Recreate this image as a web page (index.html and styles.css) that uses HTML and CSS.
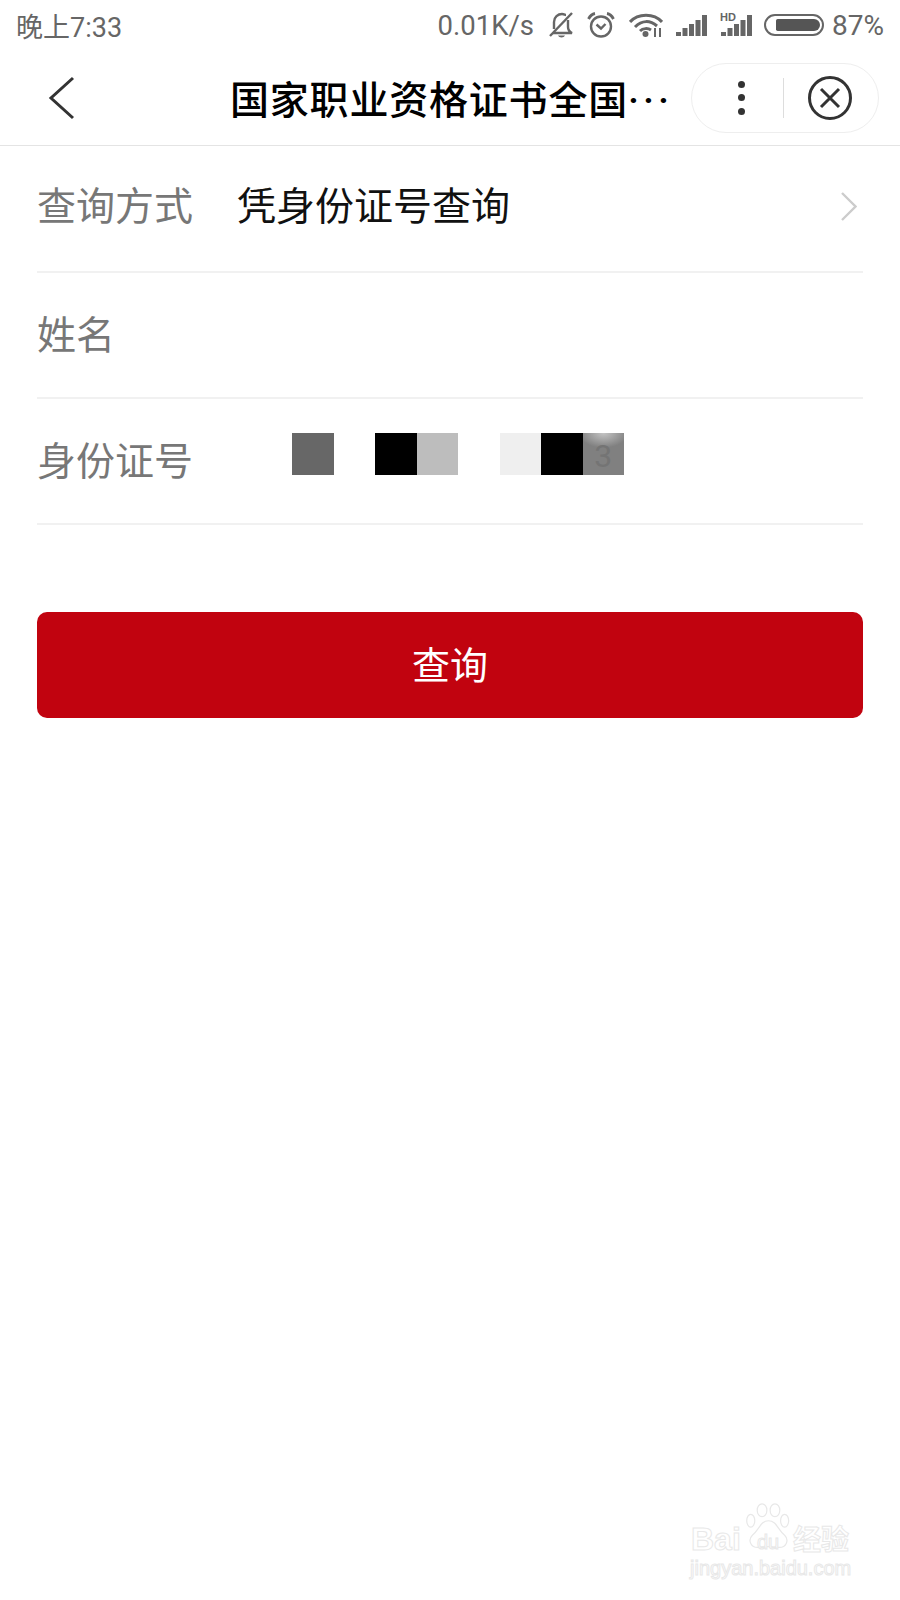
FILE: index.html
```html
<!DOCTYPE html>
<html lang="zh-CN">
<head>
    <meta charset="UTF-8">
    <meta name="viewport" content="width=device-width, initial-scale=1.0">
    <title>国家职业资格证书全国联网查询</title>
    <link rel="stylesheet" href="styles.css">
</head>
<body>
    <div class="status-bar">
        <span class="status-time">晚上7:33</span>
        <div class="status-right">
            <span class="status-speed">0.01K/s</span>
            <svg class="icon-bell" width="26" height="26" viewBox="0 0 26 26" fill="none" stroke="#666" stroke-width="2.4">
                <path d="M2 24 L24 1"/>
                <path d="M6 17 V10 C6 5 10 2 14 2 C16 2 17 3 18 3"/>
                <path d="M20 8 V15 C20 18 22 20 24 21 H5"/>
                <path d="M10 23.5 H17 C16 26 11 26 10 23.5 Z" fill="#666" stroke="none"/>
            </svg>
            <svg class="icon-clock" width="28" height="26" viewBox="0 0 28 26" fill="none" stroke="#666" stroke-width="2.4">
                <circle cx="14" cy="14.5" r="10"/>
                <path d="M9.5 12.5 L14 16.5 L18.5 12"/>
                <path d="M1.5 7 C3 4 5 2 8 1.5 M26.5 7 C25 4 23 2 20 1.5" stroke-width="2.8"/>
            </svg>
            <svg class="icon-wifi" width="34" height="24" viewBox="0 0 34 24" fill="none" stroke="#666" stroke-width="3">
                <path d="M1 9 C9 0 25 0 33 9"/>
                <path d="M6 14 C13 7 21 7 28 13"/>
                <path d="M11 18 C14 15 19 15 22 17"/>
                <circle cx="16.5" cy="21" r="3" fill="#666" stroke="none"/>
                <path d="M26 15 V24 M31 15 V24" stroke-width="2"/>
            </svg>
            <svg class="icon-signal" width="32" height="22" viewBox="0 0 32 22" fill="#666">
                <rect x="0" y="18" width="5" height="4"/>
                <rect x="6.5" y="14" width="5" height="8"/>
                <rect x="13" y="10" width="5" height="12"/>
                <rect x="19.5" y="6" width="5" height="16"/>
                <rect x="26" y="1" width="5" height="21"/>
            </svg>
            <div class="signal-hd">
                <span class="hd-label">HD</span>
                <svg width="32" height="22" viewBox="0 0 32 22" fill="#666">
                    <rect x="0" y="18" width="5" height="4"/>
                    <rect x="6.5" y="14" width="5" height="8"/>
                    <rect x="13" y="10" width="5" height="12"/>
                    <rect x="19.5" y="6" width="5" height="16"/>
                    <rect x="26" y="1" width="5" height="21"/>
                </svg>
            </div>
            <div class="battery"><div class="battery-fill"></div></div>
            <span class="status-percent">87%</span>
        </div>
    </div>

    <header class="nav-bar">
        <svg class="nav-back" width="28" height="44" viewBox="0 0 28 44" fill="none" stroke="#333" stroke-width="3">
            <path d="M25 2 L3 22 L25 42"/>
        </svg>
        <h1 class="nav-title">国家职业资格证书全国<span class="nav-dots">···</span></h1>
        <div class="capsule">
            <div class="capsule-more"><span></span><span></span><span></span></div>
            <div class="capsule-line"></div>
            <svg class="capsule-close" width="44" height="44" viewBox="0 0 44 44" fill="none" stroke="#333" stroke-width="3">
                <circle cx="22" cy="22" r="20.5"/>
                <path d="M13 13 L31 31 M31 13 L13 31"/>
            </svg>
        </div>
    </header>

    <main class="query-form">
        <div class="form-row form-row-first">
            <span class="form-label">查询方式</span>
            <span class="form-value">凭身份证号查询</span>
            <svg class="row-arrow" width="16" height="29" viewBox="0 0 16 29" fill="none" stroke="#ccc" stroke-width="2.4">
                <path d="M1 1 L14.5 14.5 L1 28"/>
            </svg>
        </div>
        <div class="form-row">
            <span class="form-label">姓名</span>
        </div>
        <div class="form-row">
            <span class="form-label">身份证号</span>
            <div class="id-mask">
                <span class="mask mask-grey"></span>
                <span class="mask mask-blank"></span>
                <span class="mask mask-black"></span>
                <span class="mask mask-silver"></span>
                <span class="mask mask-blank"></span>
                <span class="mask mask-pale"></span>
                <span class="mask mask-black"></span>
                <span class="mask mask-glow">3</span>
            </div>
        </div>
        <button class="query-button">查询</button>
    </main>

    <div class="watermark">
        <div class="wm-top">
            <span class="wm-bai">Bai</span>
            <svg class="wm-paw" width="47" height="50" viewBox="0 0 56 62" fill="#fff" stroke="#e8e8e8" stroke-width="1.5">
                <ellipse cx="6" cy="22" rx="5" ry="8"/>
                <ellipse cx="20" cy="9" rx="6" ry="8"/>
                <ellipse cx="36" cy="9" rx="6" ry="8"/>
                <ellipse cx="48" cy="22" rx="5" ry="8"/>
                <path d="M28 22 C38 22 40 34 48 40 C54 46 50 56 40 55 C34 54 22 54 16 55 C6 56 2 46 8 40 C16 34 18 22 28 22 Z"/>
            </svg>
            <span class="wm-du">du</span>
            <span class="wm-cn">经验</span>
        </div>
        <div class="wm-url">jingyan.baidu.com</div>
    </div>
</body>
</html>
```

FILE: styles.css
```css
* {
    margin: 0;
    padding: 0;
    box-sizing: border-box;
}

body {
    width: 900px;
    height: 1600px;
    background-color: #fff;
    font-family: "Roboto", "Noto Sans CJK SC", sans-serif;
    position: relative;
    overflow: hidden;
}

.status-bar {
    height: 50px;
    padding: 0 16px;
    display: flex;
    align-items: center;
    justify-content: space-between;
    color: #666;
    font-size: 27px;
}

.status-right {
    display: flex;
    align-items: center;
}

.status-speed {
    margin-right: 14px;
    font-size: 27.5px;
}

.status-percent {
    font-size: 28px;
}

.icon-bell {
    margin-right: 13px;
}

.icon-clock {
    margin-right: 14px;
}

.icon-wifi {
    margin-right: 13px;
}

.icon-signal {
    margin-right: 13px;
}

.signal-hd {
    position: relative;
    display: flex;
    margin-right: 11px;
}

.hd-label {
    position: absolute;
    top: -1px;
    left: -1px;
    font-family: "Liberation Sans", sans-serif;
    font-size: 11px;
    font-weight: 700;
    line-height: 8px;
}

.battery {
    width: 60px;
    height: 22px;
    border: 2px solid #666;
    border-radius: 11px;
    padding: 3px 2px 3px 10px;
    margin-right: 8px;
}

.battery-fill {
    height: 100%;
    background-color: #555;
    border-radius: 2px 7px 7px 2px;
}

.nav-bar {
    height: 96px;
    padding-left: 48px;
    display: flex;
    align-items: center;
    border-bottom: 1px solid #e4e4e4;
}

.nav-title {
    margin-left: 154px;
    margin-top: -2px;
    width: 440px;
    font-size: 39px;
    font-weight: 500;
    color: #000;
    white-space: nowrap;
    letter-spacing: 0.8px;
}

.nav-dots {
    letter-spacing: 4px;
}

.capsule {
    width: 188px;
    height: 70px;
    margin-left: 21px;
    border: 1px solid #eee;
    border-radius: 35px;
    display: flex;
    align-items: center;
}

.capsule-more {
    margin-left: 46px;
    display: flex;
    flex-direction: column;
    gap: 6.5px;
}

.capsule-more span {
    width: 7px;
    height: 7px;
    border-radius: 50%;
    background-color: #333;
}

.capsule-line {
    width: 1px;
    height: 40px;
    margin-left: 38px;
    background-color: #ddd;
}

.capsule-close {
    margin-left: 24px;
}

.query-form {
    padding: 1px 37px 0;
}

.form-row {
    height: 126px;
    padding-bottom: 6px;
    display: flex;
    align-items: center;
    border-bottom: 2px solid #f1f1f1;
    font-size: 39px;
}

.form-row-first {
    padding-bottom: 12px;
}

.form-label {
    width: 200px;
    color: #777;
    flex-shrink: 0;
}

.form-value {
    color: #111;
    flex-grow: 1;
}

.row-arrow {
    margin-right: 6px;
    margin-top: 6px;
}

.id-mask {
    display: flex;
    align-self: flex-start;
    margin-left: 55px;
    margin-top: 34px;
}

.mask {
    width: 41.5px;
    height: 42px;
}

.mask-grey {
    background-color: #676767;
}

.mask-blank {
    background-color: #fff;
}

.mask-black {
    background-color: #000;
}

.mask-silver {
    background-color: #bdbdbd;
}

.mask-pale {
    background-color: #efefef;
}

.mask-glow {
    background: radial-gradient(ellipse 60% 35% at 50% 0, #c4c4c4, #808080);
    color: #747474;
    font-size: 32px;
    line-height: 46px;
    text-align: center;
}

.query-button {
    display: block;
    width: 100%;
    height: 106px;
    margin-top: 87px;
    padding-bottom: 6px;
    border: none;
    border-radius: 10px;
    background-color: #c1030f;
    color: #fff;
    font-family: inherit;
    font-size: 38px;
}

.watermark {
    position: absolute;
    left: 690px;
    top: 1503px;
    width: 170px;
    color: #fff;
    -webkit-text-stroke: 1px #e8e8e8;
}

.wm-top {
    position: relative;
    height: 54px;
}

.wm-bai {
    position: absolute;
    left: 1px;
    top: 18px;
    font-family: "Liberation Sans", sans-serif;
    font-size: 32px;
    font-weight: 700;
    line-height: 36px;
}

.wm-paw {
    position: absolute;
    left: 55px;
    top: 0;
}

.wm-du {
    position: absolute;
    left: 67px;
    top: 28px;
    font-family: "Liberation Sans", sans-serif;
    font-size: 20px;
    line-height: 22px;
}

.wm-cn {
    position: absolute;
    left: 103px;
    top: 22px;
    font-size: 28px;
    font-weight: 700;
    line-height: 32px;
    white-space: nowrap;
}

.wm-url {
    font-family: "Liberation Sans", sans-serif;
    font-size: 20px;
    line-height: 22px;
    white-space: nowrap;
}
```
